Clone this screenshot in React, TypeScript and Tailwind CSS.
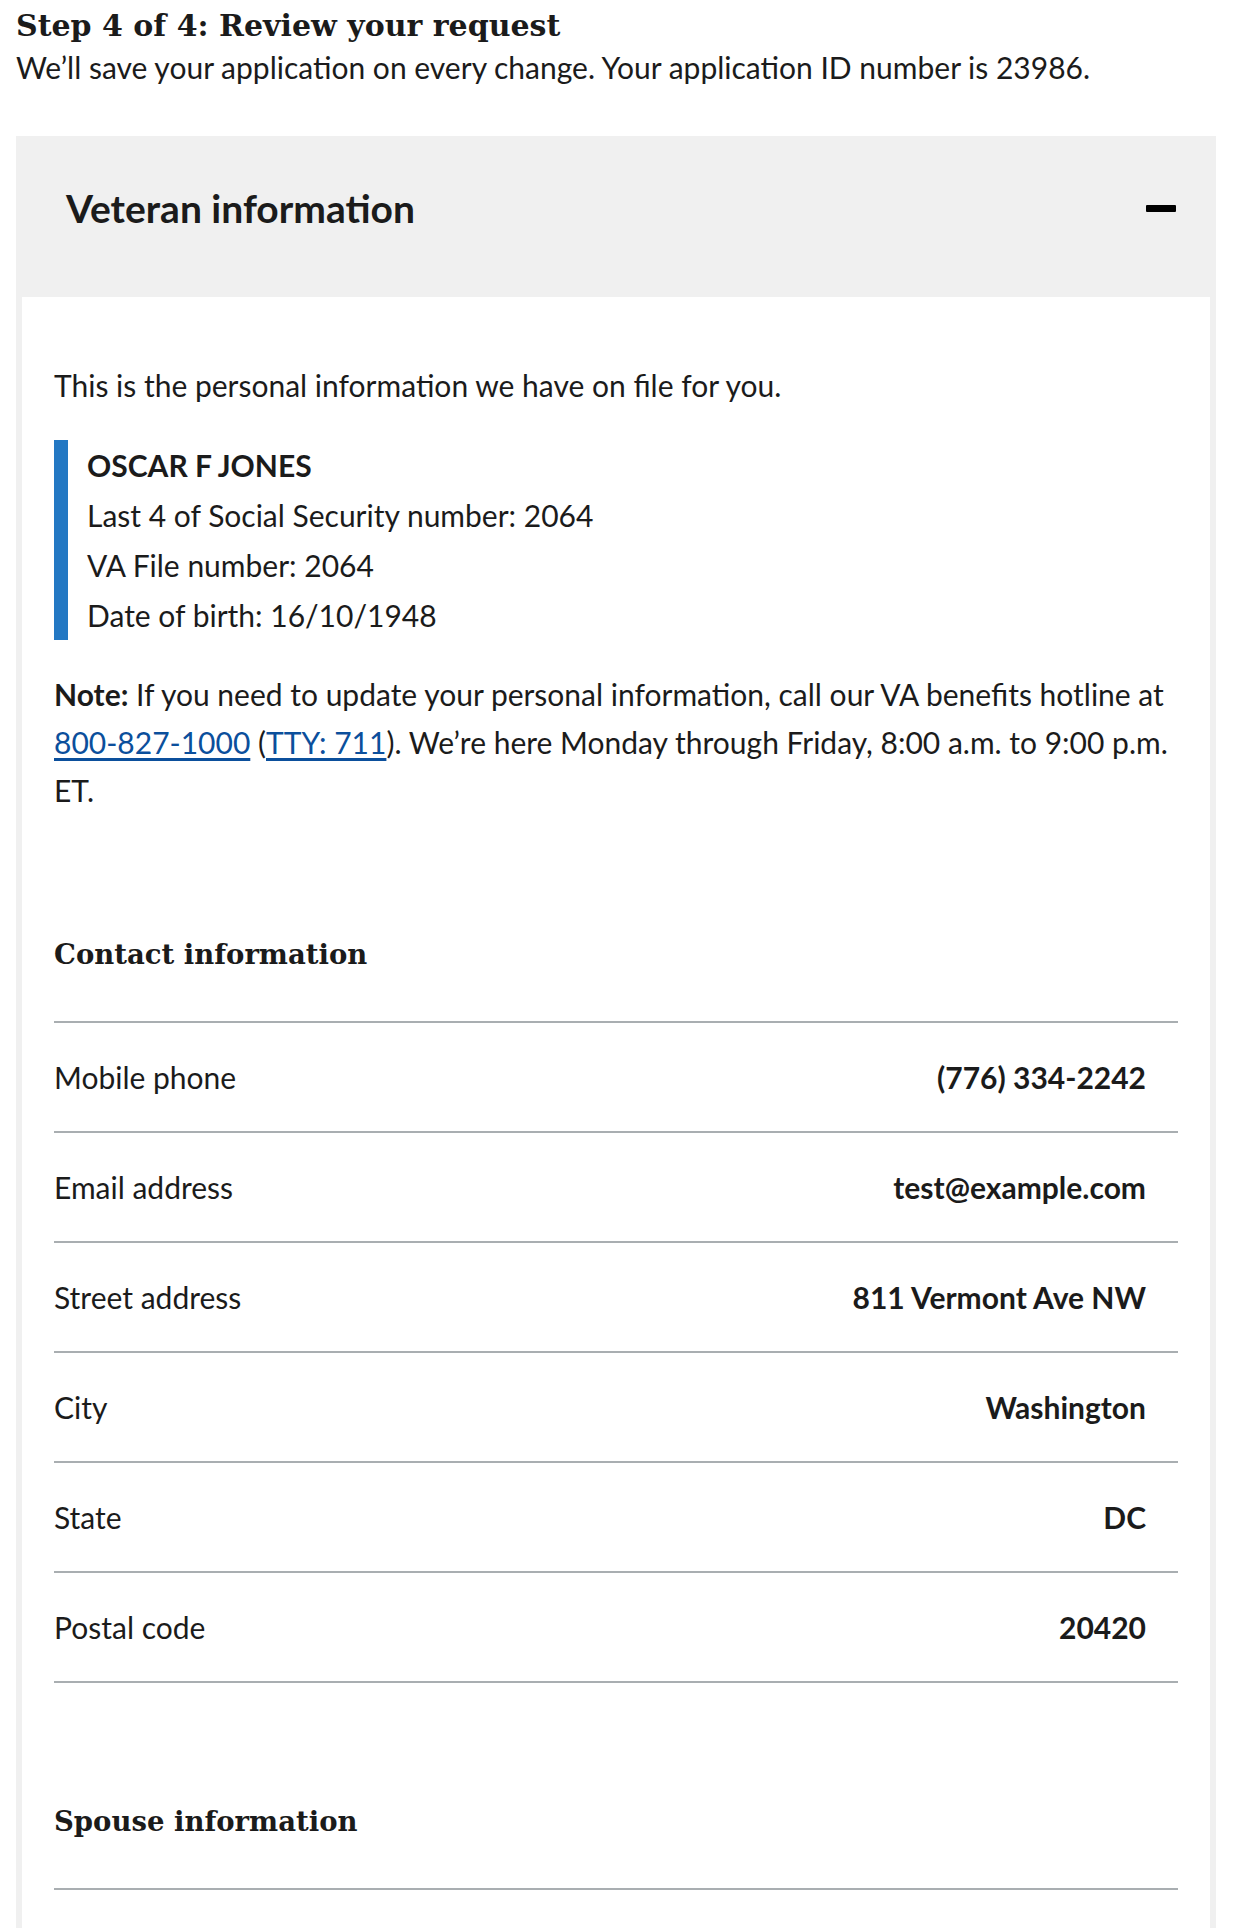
import React from "react";

const rows: [string, string][] = [
  ["Mobile phone", "(776) 334-2242"],
  ["Email address", "test@example.com"],
  ["Street address", "811 Vermont Ave NW"],
  ["City", "Washington"],
  ["State", "DC"],
  ["Postal code", "20420"],
];

const serif = { fontFamily: "'DejaVu Serif', 'Liberation Serif', serif" };

export default function App() {
  return (
    <div className="h-[1928px] overflow-hidden bg-white text-[#1b1b1b] flex flex-col" style={{ fontFamily: "Lato, 'Noto Sans', sans-serif" }}>
      <h2 className="pl-4 pt-[9px] text-[30px] leading-[34px] font-bold" style={serif}>
        Step 4 of 4: Review your request
      </h2>
      <p className="pl-4 mt-[8px] text-[30px] leading-[32px]">
        We’ll save your application on every change. Your application ID number is 23986.
      </p>

      <div className="ml-4 mt-[53px] w-[1200px] flex-1 flex flex-col">
        <div className="flex items-center justify-between bg-[#f0f0f0] pl-[50px] pr-[40px] pt-[50px] pb-[67px]">
          <h3 className="text-[39px] leading-[44px] font-bold">Veteran information</h3>
          <div className="w-[30px] h-[7px] bg-black rounded-[1px]" />
        </div>

        <div className="flex-1 bg-white border-x-[6px] border-[#f0f0f0] px-8 pt-[68px]">
          <p className="text-[30px] leading-[40px]">This is the personal information we have on file for you.</p>

          <div className="mt-[35px] border-l-[14px] border-[#2378c3] pl-[19px] text-[30px] leading-[50px]">
            <div className="font-bold">OSCAR F JONES</div>
            <div>Last 4 of Social Security number: 2064</div>
            <div>VA File number: 2064</div>
            <div>Date of birth: 16/10/1948</div>
          </div>

          <p className="mt-[30px] text-[30px] leading-[48px] whitespace-nowrap">
            <span className="font-bold">Note:</span> If you need to update your personal information, call our VA benefits hotline at
            <br />
            <a href="#" className="text-[#0b4f9c] underline underline-offset-[4px]">800-827-1000</a> (
            <a href="#" className="text-[#0b4f9c] underline underline-offset-[4px]">TTY: 711</a>). We’re here Monday through Friday, 8:00 a.m. to 9:00 p.m.
            <br />
            ET.
          </p>

          <h4 className="mt-[120px] text-[27.5px] leading-[40px] font-bold" style={serif}>
            Contact information
          </h4>

          <div className="mt-[47px] border-b-2 border-[#a9aeb1]">
            {rows.map(([label, value]) => (
              <div key={label} className="flex items-center justify-between h-[110px] border-t-2 border-[#a9aeb1] pr-8 text-[30px] leading-[40px]">
                <span>{label}</span>
                <span className="font-bold">{value}</span>
              </div>
            ))}
          </div>

          <h4 className="mt-[118px] text-[27.5px] leading-[40px] font-bold" style={serif}>
            Spouse information
          </h4>
          <div className="mt-[47px] border-t-2 border-[#a9aeb1]" />
        </div>
      </div>
    </div>
  );
}
